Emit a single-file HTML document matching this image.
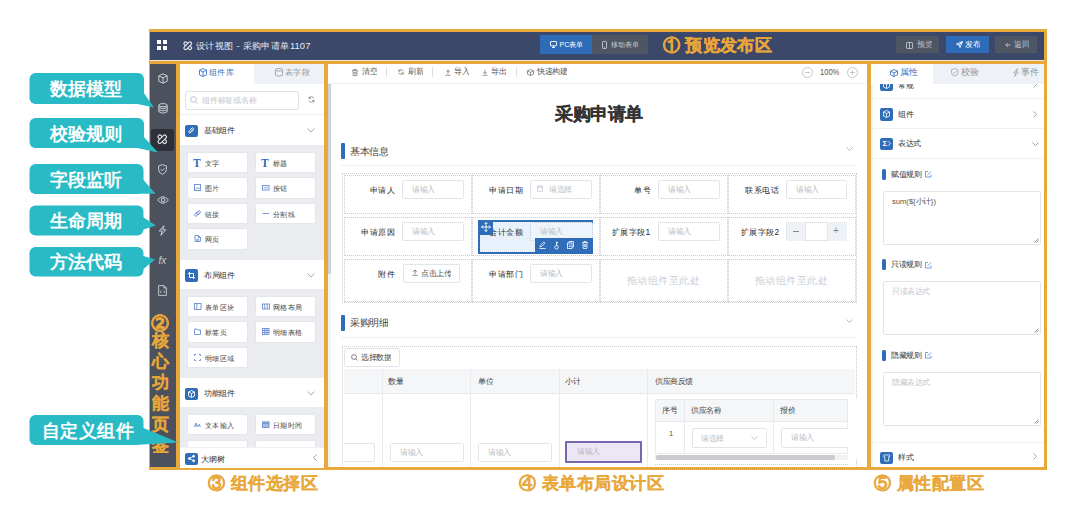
<!DOCTYPE html>
<html><head><meta charset="utf-8">
<style>
*{box-sizing:border-box;margin:0;padding:0}
html,body{width:1080px;height:522px;overflow:hidden;background:#fff}
body{position:relative;font-family:"Liberation Sans",sans-serif;color:#333}
.a{position:absolute}
.or{color:#E9A83C;font-weight:bold;-webkit-text-stroke:0.3px #E9A83C}
svg{position:absolute;overflow:visible}
.t{position:absolute;white-space:nowrap;line-height:1}
.card{position:absolute;width:61px;height:21.5px;background:#fff;border:1px solid #E3E6EB;border-radius:2px}
.ct{color:#444}
.ib{position:absolute;width:12.5px;height:12.5px;background:#2F6DB8;border-radius:2px}
.ht{color:#333}
.lab{position:absolute;white-space:nowrap;line-height:1;color:#333}
</style></head><body>

<!-- outer orange frame -->
<div class="a" style="left:149px;top:29px;width:898px;height:441px;background:#E8A83A"></div>
<!-- header -->
<div class="a" style="left:150px;top:32px;width:894px;height:28px;background:#3C4869"></div>
<div class="a" style="left:150px;top:60px;width:894px;height:1px;background:#EFE6D4"></div>
<!-- sidebar -->
<div class="a" style="left:150px;top:64px;width:26px;height:403px;background:#4B525D"></div>
<!-- component panel -->
<div class="a" id="p3" style="left:180px;top:64px;width:144px;height:403px;background:#fff;overflow:hidden"></div>
<!-- canvas -->
<div class="a" id="p4" style="left:328px;top:64px;width:539px;height:403px;background:#fff;overflow:hidden"></div>
<!-- right panel -->
<div class="a" id="p5" style="left:871px;top:64px;width:173px;height:403px;background:#fff;overflow:hidden"></div>

<div id="comp">
<!-- tabs -->
<div class="a" style="left:254px;top:64px;width:70px;height:20px;background:#EEF1F5"></div>
<svg style="left:199px;top:68px" width="8" height="9" viewBox="0 0 8 9" fill="none" stroke="#3A74C2" stroke-width="0.9"><path d="M4 .5 L7.5 2.2 V6.8 L4 8.5 L.5 6.8 V2.2 Z M.5 2.2 L4 4 L7.5 2.2 M4 4 V8.5"/></svg>
<div class="t" style="left:208.5px;top:68px;font-size:20px;color:#3A74C2;transform:scale(0.4150);transform-origin:0 0">组件库</div>
<svg style="left:275px;top:68px" width="8" height="9" viewBox="0 0 8 9" fill="none" stroke="#9AA1AB" stroke-width="0.9"><ellipse cx="4" cy="1.8" rx="3.5" ry="1.3"/><path d="M.5 1.8 V7.2 Q4 9.4 7.5 7.2 V1.8"/></svg>
<div class="t" style="left:285px;top:68px;font-size:20px;color:#8E949C;transform:scale(0.4150);transform-origin:0 0">表字段</div>
<!-- search -->
<div class="a" style="left:184.5px;top:90.5px;width:114px;height:19px;border:1px solid #DFE3E8;border-radius:2px"></div>
<svg style="left:189.5px;top:96px" width="8" height="8" viewBox="0 0 8 8" fill="none" stroke="#B0B5BC" stroke-width="0.9"><circle cx="3.5" cy="3.5" r="2.8"/><path d="M5.6 5.6 L7.4 7.4"/></svg>
<div class="t" style="left:202px;top:96px;font-size:20px;color:#BFC3CA;transform:scale(0.3900);transform-origin:0 0">组件标签或名称</div>
<svg style="left:307.5px;top:96px" width="7" height="7" viewBox="0 0 7 7" fill="none" stroke="#8E949C" stroke-width="0.9"><path d="M6 2.5 A2.7 2.7 0 0 0 1 2.3 M1 4.5 A2.7 2.7 0 0 0 6 4.7 M1 .5 V2.5 H3 M6 6.5 V4.5 H4"/></svg>
<div class="a" style="left:180px;top:114px;width:144px;height:1px;background:#EEF0F3"></div>
<!-- gray areas -->
<div class="a" style="left:180px;top:145px;width:144px;height:115px;background:#EAECF0"></div>
<div class="a" style="left:180px;top:288.5px;width:144px;height:90px;background:#EAECF0"></div>
<div class="a" style="left:180px;top:407px;width:144px;height:60px;background:#EAECF0"></div>
<div class="a" style="left:180px;top:115px;width:144px;height:29px;background:#fff"></div>
<div class="ib" style="left:185px;top:124.5px"></div><svg style="left:187.5px;top:127.0px" width="7" height="7" viewBox="0 0 7 7" fill="none" stroke="#fff" stroke-width="1"><path d="M5.5 2.8 L3 5.3 Q2 6.3 1.2 5.5 Q.4 4.7 1.4 3.7 L4 1.1 Q4.6 .5 5.2 1.1 Q5.8 1.7 5.2 2.3 L2.8 4.7"/></svg>
<div class="t ht" style="font-size:20px;left:203.5px;top:127px;transform:scale(0.3800);transform-origin:0 0">基础组件</div>
<svg style="left:306.5px;top:128px" width="8" height="5" viewBox="0 0 8 5" fill="none" stroke="#9AA0A8" stroke-width="0.9"><path d="M.5 .5 L4 4 L7.5 .5"/></svg>
<div class="a" style="left:180px;top:259.5px;width:144px;height:29px;background:#fff"></div>
<div class="ib" style="left:185px;top:269.0px"></div><svg style="left:187.5px;top:271.5px" width="7" height="7" viewBox="0 0 7 7" fill="none" stroke="#fff" stroke-width="1"><path d="M1.5 0 V5.5 H7 M0 1.5 H5.5 V7"/></svg>
<div class="t ht" style="font-size:20px;left:203.5px;top:271.5px;transform:scale(0.3800);transform-origin:0 0">布局组件</div>
<svg style="left:306.5px;top:272.5px" width="8" height="5" viewBox="0 0 8 5" fill="none" stroke="#9AA0A8" stroke-width="0.9"><path d="M.5 .5 L4 4 L7.5 .5"/></svg>
<div class="a" style="left:180px;top:378px;width:144px;height:29px;background:#fff"></div>
<div class="ib" style="left:185px;top:387.5px"></div><svg style="left:187.5px;top:389.8px" width="7" height="8" viewBox="0 0 7 8" fill="none" stroke="#fff" stroke-width="0.9"><path d="M3.5 .5 L6.5 2 V6 L3.5 7.5 L.5 6 V2 Z M.5 2 L3.5 3.5 L6.5 2 M3.5 3.5 V7.5"/></svg>
<div class="t ht" style="font-size:20px;left:203.5px;top:390px;transform:scale(0.3800);transform-origin:0 0">功能组件</div>
<svg style="left:306.5px;top:391px" width="8" height="5" viewBox="0 0 8 5" fill="none" stroke="#9AA0A8" stroke-width="0.9"><path d="M.5 .5 L4 4 L7.5 .5"/></svg>
<div class="card" style="left:186.7px;top:151.5px"></div><div class="t" style="left:193.0px;top:157.0px;font-family:'Liberation Serif',serif;font-weight:bold;font-size:20px;color:#2F6DB8;transform:scale(0.5750);transform-origin:0 0">T</div><div class="t ct" style="font-size:20px;left:204.8px;top:159.8px;transform:scale(0.3650);transform-origin:0 0">文字</div>
<div class="card" style="left:254.7px;top:151.5px"></div><div class="t" style="left:261.0px;top:157.0px;font-family:'Liberation Serif',serif;font-weight:bold;font-size:20px;color:#2F6DB8;transform:scale(0.5750);transform-origin:0 0">T</div><div class="t ct" style="font-size:20px;left:272.8px;top:159.8px;transform:scale(0.3650);transform-origin:0 0">标题</div>
<div class="card" style="left:186.7px;top:177px"></div><svg style="left:194.0px;top:184.3px" width="7" height="7" viewBox="0 0 7 7" fill="none" stroke="#6A8DD0" stroke-width="0.9"><rect x=".5" y=".5" width="6" height="6"/><path d="M1 5.5 L3 3.5 L4.5 5 L6 3.8"/></svg><div class="t ct" style="font-size:20px;left:204.8px;top:185.3px;transform:scale(0.3650);transform-origin:0 0">图片</div>
<div class="card" style="left:254.7px;top:177px"></div><svg style="left:262.0px;top:184.3px" width="8" height="7" viewBox="0 0 8 7" fill="none" stroke="#6A8DD0" stroke-width="0.9"><rect x=".5" y="1.5" width="6.5" height="4.5"/><path d="M1.8 3.8 H5.7"/></svg><div class="t ct" style="font-size:20px;left:272.8px;top:185.3px;transform:scale(0.3650);transform-origin:0 0">按钮</div>
<div class="card" style="left:186.7px;top:202.5px"></div><svg style="left:194.0px;top:209.8px" width="7" height="7" viewBox="0 0 7 7" fill="none" stroke="#6A8DD0" stroke-width="0.9"><rect x="3.2" y=".6" width="2.6" height="4.2" rx="1.3" transform="rotate(45 4.5 2.7)"/><rect x="1.2" y="2.2" width="2.6" height="4.2" rx="1.3" transform="rotate(45 2.5 4.3)"/></svg><div class="t ct" style="font-size:20px;left:204.8px;top:210.8px;transform:scale(0.3650);transform-origin:0 0">链接</div>
<div class="card" style="left:254.7px;top:202.5px"></div><svg style="left:262.0px;top:209.8px" width="8" height="7" viewBox="0 0 8 7" fill="none" stroke="#6A8DD0" stroke-width="0.9"><path d="M.5 3.5 H7"/></svg><div class="t ct" style="font-size:20px;left:272.8px;top:210.8px;transform:scale(0.3650);transform-origin:0 0">分割线</div>
<div class="card" style="left:186.7px;top:228px"></div><svg style="left:194.0px;top:235.3px" width="7" height="7" viewBox="0 0 7 7" fill="none" stroke="#6A8DD0" stroke-width="0.9"><path d="M1 .5 H4.5 L6.5 2.5 V6.5 H1 Z M4.5 .5 V2.5 H6.5 M2.3 4.2 H5.2 M2.3 5.3 H5.2"/></svg><div class="t ct" style="font-size:20px;left:204.8px;top:236.3px;transform:scale(0.3650);transform-origin:0 0">网页</div>
<div class="card" style="left:186.7px;top:295.5px"></div><svg style="left:194.0px;top:302.8px" width="8" height="7" viewBox="0 0 8 7" fill="none" stroke="#6A8DD0" stroke-width="0.9"><rect x=".5" y=".5" width="6.5" height="6"/><path d="M2.8 .5 V6.5"/></svg><div class="t ct" style="font-size:20px;left:204.8px;top:303.8px;transform:scale(0.3650);transform-origin:0 0">表单区块</div>
<div class="card" style="left:254.7px;top:295.5px"></div><svg style="left:262.0px;top:302.8px" width="8" height="7" viewBox="0 0 8 7" fill="none" stroke="#6A8DD0" stroke-width="0.9"><rect x=".5" y="1" width="7" height="5"/><path d="M2.8 1 V6 M5.2 1 V6"/></svg><div class="t ct" style="font-size:20px;left:272.8px;top:303.8px;transform:scale(0.3650);transform-origin:0 0">网格布局</div>
<div class="card" style="left:186.7px;top:321px"></div><svg style="left:194.0px;top:328.3px" width="7" height="7" viewBox="0 0 7 7" fill="none" stroke="#6A8DD0" stroke-width="0.9"><path d="M.5 1 H3 L3.8 2 H6.5 V6.5 H.5 Z"/></svg><div class="t ct" style="font-size:20px;left:204.8px;top:329.3px;transform:scale(0.3650);transform-origin:0 0">标签页</div>
<div class="card" style="left:254.7px;top:321px"></div><svg style="left:262.0px;top:328.3px" width="8" height="7" viewBox="0 0 8 7" fill="none" stroke="#6A8DD0" stroke-width="0.9"><rect x=".5" y=".5" width="6.5" height="6"/><path d="M.5 2.5 H7 M.5 4.5 H7 M2.7 .5 V6.5 M4.9 .5 V6.5"/></svg><div class="t ct" style="font-size:20px;left:272.8px;top:329.3px;transform:scale(0.3650);transform-origin:0 0">明细表格</div>
<div class="card" style="left:186.7px;top:346.5px"></div><svg style="left:194.0px;top:353.8px" width="7" height="7" viewBox="0 0 7 7" fill="none" stroke="#6A8DD0" stroke-width="0.9"><path d="M.5 2 V.5 H2 M5 .5 H6.5 V2 M6.5 5 V6.5 H5 M2 6.5 H.5 V5"/></svg><div class="t ct" style="font-size:20px;left:204.8px;top:354.8px;transform:scale(0.3650);transform-origin:0 0">明细区域</div>
<div class="card" style="left:186.7px;top:413.5px"></div><svg style="left:194.0px;top:420.8px" width="8" height="7" viewBox="0 0 8 7" fill="none" stroke="#6A8DD0" stroke-width="0.9"><path d="M.5 6 L2 2 L3.5 6 M1 4.8 H3 M4 6 L5.2 3.2 L6.4 6"/></svg><div class="t ct" style="font-size:20px;left:204.8px;top:421.8px;transform:scale(0.3650);transform-origin:0 0">文本输入</div>
<div class="card" style="left:254.7px;top:413.5px"></div><svg style="left:262.0px;top:420.8px" width="8" height="7" viewBox="0 0 8 7" fill="none" stroke="#6A8DD0" stroke-width="0.9"><rect x=".5" y="1" width="6.5" height="5.5" fill="#A9C0E8"/><path d="M.5 2.6 H7 M2 .2 V1.6 M5.5 .2 V1.6"/></svg><div class="t ct" style="font-size:20px;left:272.8px;top:421.8px;transform:scale(0.3650);transform-origin:0 0">日期时间</div>
<div class="card" style="left:186.7px;top:439.5px"></div><div class="t ct" style="font-size:20px;left:204.8px;top:447.8px;transform:scale(0.3650);transform-origin:0 0"></div>
<div class="card" style="left:254.7px;top:439.5px"></div><div class="t ct" style="font-size:20px;left:272.8px;top:447.8px;transform:scale(0.3650);transform-origin:0 0"></div>
<!-- outline tree bar -->
<div class="a" style="left:180px;top:446.5px;width:144px;height:21px;background:#fff;border-top:1px solid #EEF0F3"></div>
<div class="ib" style="left:185px;top:452.5px"></div>
<svg style="left:187.5px;top:455px" width="7" height="7" viewBox="0 0 7 7" fill="#fff" stroke="#fff" stroke-width="0.8"><circle cx="5.6" cy="1.2" r="1"/><circle cx="1.4" cy="3.5" r="1"/><circle cx="5.6" cy="5.8" r="1"/><path d="M5.6 1.2 L1.4 3.5 L5.6 5.8" fill="none"/></svg>
<div class="t" style="left:200.5px;top:455.5px;font-size:8px;color:#333">大纲树</div>
<svg style="left:313px;top:454px" width="4" height="7" viewBox="0 0 4 7" fill="none" stroke="#8E949C" stroke-width="0.9"><path d="M3.5 .5 L.5 3.5 L3.5 6.5"/></svg>
</div>
<div id="canvas" class="a" style="left:0;top:0;width:1080px;height:522px;clip-path:inset(64px 213.5px 55px 328px)">
<div class="a" style="left:328px;top:83px;width:539px;height:1px;background:#EEF0F3"></div>
<svg style="left:352px;top:68.5px" width="6" height="7" viewBox="0 0 6 7" fill="none" stroke="#777" stroke-width="0.8"><path d="M.3 1.3 H5.7 M2 1.3 V.4 H4 V1.3 M.9 1.3 L1.3 6.6 H4.7 L5.1 1.3 M2.3 2.8 V5.2 M3.7 2.8 V5.2"/></svg>
<div class="t" style="left:361.5px;top:68px;font-size:20px;color:#555;transform:scale(0.3750);transform-origin:0 0">清空</div>
<div class="a" style="left:386px;top:67px;width:1px;height:9.5px;background:#DDE0E5"></div>
<svg style="left:397.8px;top:68.8px" width="6" height="6" viewBox="0 0 6 6" fill="none" stroke="#777" stroke-width="0.8"><path d="M5.3 2.2 A2.5 2.5 0 0 0 .8 2 M.7 3.8 A2.5 2.5 0 0 0 5.2 4 M.7 .5 V2.1 H2.3 M5.3 5.5 V3.9 H3.7"/></svg>
<div class="t" style="left:407.5px;top:68px;font-size:20px;color:#555;transform:scale(0.3750);transform-origin:0 0">刷新</div>
<div class="a" style="left:432px;top:67px;width:1px;height:9.5px;background:#DDE0E5"></div>
<svg style="left:444.5px;top:68.5px" width="6" height="7" viewBox="0 0 6 7" fill="none" stroke="#777" stroke-width="0.8"><path d="M.5 6.3 H5.5 M3 5 V1 M1.3 2.7 L3 1 L4.7 2.7"/></svg>
<div class="t" style="left:453.5px;top:68px;font-size:20px;color:#555;transform:scale(0.3750);transform-origin:0 0">导入</div>
<svg style="left:482px;top:68.5px" width="6" height="7" viewBox="0 0 6 7" fill="none" stroke="#777" stroke-width="0.8"><path d="M.5 6.3 H5.5 M3 .8 V4.8 M1.3 3.1 L3 4.8 L4.7 3.1"/></svg>
<div class="t" style="left:490.5px;top:68px;font-size:20px;color:#555;transform:scale(0.3750);transform-origin:0 0">导出</div>
<div class="a" style="left:515.5px;top:67px;width:1px;height:9.5px;background:#DDE0E5"></div>
<svg style="left:526.5px;top:68.5px" width="7" height="7" viewBox="0 0 7 7" fill="none" stroke="#777" stroke-width="0.8"><path d="M3.5 .4 L6.5 1.9 V5.1 L3.5 6.6 L.5 5.1 V1.9 Z M.5 1.9 L3.5 3.4 L6.5 1.9 M3.5 3.4 V6.6"/></svg>
<div class="t" style="left:536.5px;top:68px;font-size:20px;color:#555;transform:scale(0.3750);transform-origin:0 0">快速构建</div>
<svg style="left:802px;top:66.5px" width="11" height="11" viewBox="0 0 11 11" fill="none" stroke="#B5B9C0" stroke-width="0.8"><circle cx="5.5" cy="5.5" r="5"/><path d="M3 5.5 H8"/></svg>
<div class="t" style="left:820px;top:67.5px;font-size:9px;color:#555;transform:scaleX(0.84);transform-origin:0 0">100%</div>
<svg style="left:846.5px;top:66.5px" width="11" height="11" viewBox="0 0 11 11" fill="none" stroke="#B5B9C0" stroke-width="0.8"><circle cx="5.5" cy="5.5" r="5"/><path d="M3 5.5 H8 M5.5 3 V8"/></svg>
<div class="a" style="left:328px;top:84px;width:3px;height:383px;background:#F2F3F5"></div>
<div class="a" style="left:328px;top:84px;width:3px;height:190px;background:#CFD2D6"></div>
<div class="t" style="left:555px;top:104.8px;font-size:20px;color:#333;font-weight:bold;letter-spacing:0.000px;-webkit-text-stroke:0.35px #333;transform:scale(0.8750);transform-origin:0 0">采购申请单</div>
<div class="a" style="left:341px;top:142.5px;width:3.5px;height:16px;background:#2F6DB8;border-radius:1px"></div>
<div class="t" style="left:350px;top:146.5px;font-size:20px;color:#444;transform:scale(0.4750);transform-origin:0 0">基本信息</div>
<svg style="left:846px;top:147px" width="7" height="5" viewBox="0 0 7 5" fill="none" stroke="#A0A5AD" stroke-width="0.8"><path d="M.5 .5 L3.5 3.5 L6.5 .5"/></svg>
<div class="a" style="left:341px;top:165px;width:515px;height:1px;background:#EEF0F3"></div>
<div class="a" style="left:341.5px;top:173px;width:515px;height:130px;border:1px dotted #C9CCD2"></div>
<div class="a" style="left:343.5px;top:175px;width:128px;height:38.5px;border:1px dotted #C9CCD2"></div>
<div class="a" style="left:471.5px;top:175px;width:128px;height:38.5px;border:1px dotted #C9CCD2"></div>
<div class="a" style="left:599.5px;top:175px;width:128px;height:38.5px;border:1px dotted #C9CCD2"></div>
<div class="a" style="left:727.5px;top:175px;width:128px;height:38.5px;border:1px dotted #C9CCD2"></div>
<div class="a" style="left:343.5px;top:217px;width:128px;height:38.5px;border:1px dotted #C9CCD2"></div>
<div class="a" style="left:471.5px;top:217px;width:128px;height:38.5px;border:1px dotted #C9CCD2"></div>
<div class="a" style="left:599.5px;top:217px;width:128px;height:38.5px;border:1px dotted #C9CCD2"></div>
<div class="a" style="left:727.5px;top:217px;width:128px;height:38.5px;border:1px dotted #C9CCD2"></div>
<div class="a" style="left:343.5px;top:259px;width:128px;height:43px;border:1px dotted #C9CCD2"></div>
<div class="a" style="left:471.5px;top:259px;width:128px;height:43px;border:1px dotted #C9CCD2"></div>
<div class="a" style="left:599.5px;top:259px;width:128px;height:43px;border:1px dotted #C9CCD2"></div>
<div class="a" style="left:727.5px;top:259px;width:128px;height:43px;border:1px dotted #C9CCD2"></div>
<div class="t lab" style="font-size:20px;color:#2a2a2a;right:685px;top:186px;transform:scale(0.4200);transform-origin:100% 0">申请人</div>
<div class="a" style="left:402px;top:179.5px;width:62px;height:19.5px;background:#fff;border:1px solid #E1E4E9;border-radius:1.5px"></div><div class="t" style="left:412px;top:186px;font-size:20px;color:#B8BCC3;transform:scale(0.3750);transform-origin:0 0">请输入</div>
<div class="t lab" style="font-size:20px;color:#2a2a2a;right:557px;top:186px;transform:scale(0.4200);transform-origin:100% 0">申请日期</div>
<div class="a" style="left:529.5px;top:179.5px;width:62px;height:19.5px;background:#fff;border:1px solid #E1E4E9;border-radius:1.5px"></div><div class="t" style="left:548.5px;top:186px;font-size:20px;color:#B8BCC3;transform:scale(0.3750);transform-origin:0 0">请选择</div>
<svg style="left:537px;top:185px" width="6" height="7" viewBox="0 0 6 7" fill="none" stroke="#C5C9CF" stroke-width="0.7"><rect x=".4" y="1" width="5.2" height="5.6"/><path d="M.4 2.6 H5.6 M1.8 .2 V1.6 M4.2 .2 V1.6"/></svg>
<div class="t lab" style="font-size:20px;color:#2a2a2a;right:429.5px;top:186px;transform:scale(0.4200);transform-origin:100% 0">单号</div>
<div class="a" style="left:657.5px;top:179.5px;width:62px;height:19.5px;background:#fff;border:1px solid #E1E4E9;border-radius:1.5px"></div><div class="t" style="left:667.5px;top:186px;font-size:20px;color:#B8BCC3;transform:scale(0.3750);transform-origin:0 0">请输入</div>
<div class="t lab" style="font-size:20px;color:#2a2a2a;right:301px;top:186px;transform:scale(0.4200);transform-origin:100% 0">联系电话</div>
<div class="a" style="left:786px;top:179.5px;width:61px;height:19.5px;background:#fff;border:1px solid #E1E4E9;border-radius:1.5px"></div><div class="t" style="left:796px;top:186px;font-size:20px;color:#B8BCC3;transform:scale(0.3750);transform-origin:0 0">请输入</div>
<div class="t lab" style="font-size:20px;color:#2a2a2a;right:685px;top:227.5px;transform:scale(0.4200);transform-origin:100% 0">申请原因</div>
<div class="a" style="left:402px;top:221.5px;width:62px;height:19.5px;background:#fff;border:1px solid #E1E4E9;border-radius:1.5px"></div><div class="t" style="left:412px;top:228px;font-size:20px;color:#B8BCC3;transform:scale(0.3750);transform-origin:0 0">请输入</div>
<div class="a" style="left:478px;top:219.5px;width:115px;height:34px;background:#E8F1FB;border:2px solid #2F6DB8"></div>
<div class="t lab" style="font-size:20px;color:#2a2a2a;right:557px;top:227.5px;transform:scale(0.4200);transform-origin:100% 0">合计金额</div>
<div class="a" style="left:529.5px;top:221.5px;width:63px;height:19px;background:#EEF4FB;border:1px solid #D5E1EE;border-radius:1.5px"></div><div class="t" style="left:539.5px;top:228px;font-size:20px;color:#B8BCC3;transform:scale(0.3750);transform-origin:0 0">请输入</div>
<div class="a" style="left:478px;top:219.5px;width:14.5px;height:15.5px;background:#2F6DB8"></div>
<svg style="left:480.5px;top:222px" width="10" height="10" viewBox="0 0 10 10" fill="none" stroke="#fff" stroke-width="0.9"><path d="M5 .5 V9.5 M.5 5 H9.5 M3.5 2 L5 .5 L6.5 2 M3.5 8 L5 9.5 L6.5 8 M2 3.5 L.5 5 L2 6.5 M8 3.5 L9.5 5 L8 6.5"/></svg>
<div class="a" style="left:535px;top:238px;width:58px;height:15.5px;background:#2F6DB8"></div>
<svg style="left:539px;top:241px" width="7" height="8" viewBox="0 0 7 8" fill="none" stroke="#fff" stroke-width="0.8"><path d="M1 6 L1.5 4.3 L4.8 1 L6 2.2 L2.7 5.5 Z M.5 7.5 H6.5"/></svg>
<svg style="left:554px;top:240.5px" width="5" height="9" viewBox="0 0 5 9" fill="none" stroke="#fff" stroke-width="0.8"><circle cx="2.5" cy="6.3" r="1.8"/><path d="M2.5 4.5 V.5 M2.5 1.5 H4 M2.5 2.8 H3.6"/></svg>
<svg style="left:567px;top:241px" width="7" height="8" viewBox="0 0 7 8" fill="none" stroke="#fff" stroke-width="0.8"><rect x=".5" y="2" width="4.5" height="5.5"/><path d="M2 2 V.5 H6.5 V6 H5 M1.8 4 H3.7 M1.8 5.5 H3.7"/></svg>
<svg style="left:581.5px;top:240.5px" width="6" height="8" viewBox="0 0 6 8" fill="none" stroke="#fff" stroke-width="0.8"><path d="M.3 1.5 H5.7 M2 1.5 V.5 H4 V1.5 M.9 1.5 L1.2 7.5 H4.8 L5.1 1.5 M2.3 3 V6 M3.7 3 V6"/></svg>
<div class="t lab" style="font-size:20px;color:#2a2a2a;right:429.5px;top:227.5px;transform:scale(0.4200);transform-origin:100% 0">扩展字段1</div>
<div class="a" style="left:657.5px;top:221.5px;width:62px;height:19.5px;background:#fff;border:1px solid #E1E4E9;border-radius:1.5px"></div><div class="t" style="left:667.5px;top:228px;font-size:20px;color:#B8BCC3;transform:scale(0.3750);transform-origin:0 0">请输入</div>
<div class="t lab" style="font-size:20px;color:#2a2a2a;right:301px;top:227.5px;transform:scale(0.4200);transform-origin:100% 0">扩展字段2</div>
<div class="a" style="left:786px;top:221.5px;width:61px;height:19.5px;background:#fff;border:1px solid #E1E4E9;border-radius:1.5px"></div>
<div class="a" style="left:786.5px;top:222px;width:19.5px;height:18.5px;background:#EEF1F5;border-right:1px solid #E1E4E9"></div>
<div class="a" style="left:826.5px;top:222px;width:20px;height:18.5px;background:#EEF1F5;border-left:1px solid #E1E4E9"></div>
<div class="a" style="left:792.5px;top:231px;width:6px;height:1px;background:#888"></div>
<div class="t" style="left:833px;top:226px;font-size:10px;color:#888;">+</div>
<div class="t lab" style="font-size:20px;color:#2a2a2a;right:685px;top:269.5px;transform:scale(0.4200);transform-origin:100% 0">附件</div>
<div class="a" style="left:402.5px;top:264px;width:57px;height:19px;background:#fff;border:1px solid #E1E4E9;border-radius:1.5px"></div>
<svg style="left:412px;top:269px" width="6" height="7" viewBox="0 0 6 7" fill="none" stroke="#666" stroke-width="0.8"><path d="M.5 6.3 H5.5 M3 5 V1 M1.3 2.7 L3 1 L4.7 2.7"/></svg>
<div class="t" style="left:421px;top:270px;font-size:20px;color:#555;transform:scale(0.3750);transform-origin:0 0">点击上传</div>
<div class="t lab" style="font-size:20px;color:#2a2a2a;right:557px;top:269.5px;transform:scale(0.4200);transform-origin:100% 0">申请部门</div>
<div class="a" style="left:530px;top:264px;width:61.5px;height:19px;background:#fff;border:1px solid #E1E4E9;border-radius:1.5px"></div><div class="t" style="left:540px;top:270px;font-size:20px;color:#B8BCC3;transform:scale(0.3750);transform-origin:0 0">请输入</div>
<div class="t" style="left:626.5px;top:275.5px;font-size:10px;color:#CDD0D5;letter-spacing:0.5px">拖动组件至此处</div>
<div class="t" style="left:754.5px;top:275.5px;font-size:10px;color:#CDD0D5;letter-spacing:0.5px">拖动组件至此处</div>
<div class="a" style="left:341px;top:314.5px;width:3.5px;height:16px;background:#2F6DB8;border-radius:1px"></div>
<div class="t" style="left:350px;top:318px;font-size:20px;color:#444;transform:scale(0.4750);transform-origin:0 0">采购明细</div>
<svg style="left:846px;top:319px" width="7" height="5" viewBox="0 0 7 5" fill="none" stroke="#A0A5AD" stroke-width="0.8"><path d="M.5 .5 L3.5 3.5 L6.5 .5"/></svg>
<div class="a" style="left:341px;top:337px;width:515px;height:1px;background:#EEF0F3"></div>
<div class="a" style="left:341.5px;top:346px;width:515px;height:130px;border:1px dotted #C9CCD2"></div>
<div class="a" style="left:344px;top:348px;width:56px;height:18.5px;background:#fff;border:1px solid #E1E4E9;border-radius:1.5px"></div>
<svg style="left:351px;top:354px" width="7" height="7" viewBox="0 0 7 7" fill="none" stroke="#666" stroke-width="0.8"><circle cx="3" cy="3" r="2.4"/><path d="M4.8 4.8 L6.5 6.5"/></svg>
<div class="t" style="left:361px;top:353.5px;font-size:20px;color:#444;transform:scale(0.3750);transform-origin:0 0">选择数据</div>
<div class="a" style="left:344px;top:369px;width:510.5px;height:25px;background:#F5F6F8;border-bottom:1px solid #E8EAED"></div>
<div class="a" style="left:344px;top:394px;width:510.5px;height:73px;background:#fff"></div>
<div class="a" style="left:381.5px;top:369px;width:1px;height:98px;background:#E8EAED"></div>
<div class="a" style="left:470px;top:369px;width:1px;height:98px;background:#E8EAED"></div>
<div class="a" style="left:559px;top:369px;width:1px;height:98px;background:#E8EAED"></div>
<div class="a" style="left:647px;top:369px;width:1px;height:98px;background:#E8EAED"></div>
<div class="t" style="left:388px;top:378px;font-size:20px;color:#444;transform:scale(0.3750);transform-origin:0 0">数量</div>
<div class="t" style="left:477.5px;top:378px;font-size:20px;color:#444;transform:scale(0.3750);transform-origin:0 0">单位</div>
<div class="t" style="left:565px;top:378px;font-size:20px;color:#444;transform:scale(0.3750);transform-origin:0 0">小计</div>
<div class="t" style="left:654.5px;top:378px;font-size:20px;color:#444;transform:scale(0.3750);transform-origin:0 0">供应商反馈</div>
<div class="a" style="left:344px;top:442.5px;width:30.5px;height:19px;background:#fff;border:1px solid #E1E4E9;border-left:none;border-radius:0 1.5px 1.5px 0"></div>
<div class="a" style="left:389.5px;top:442.5px;width:74px;height:19px;background:#fff;border:1px solid #E1E4E9;border-radius:1.5px"></div><div class="t" style="left:399.5px;top:448.5px;font-size:20px;color:#B8BCC3;transform:scale(0.3750);transform-origin:0 0">请输入</div>
<div class="a" style="left:478px;top:442.5px;width:74px;height:19px;background:#fff;border:1px solid #E1E4E9;border-radius:1.5px"></div><div class="t" style="left:488px;top:448.5px;font-size:20px;color:#B8BCC3;transform:scale(0.3750);transform-origin:0 0">请输入</div>
<div class="a" style="left:565px;top:440.5px;width:77px;height:22.5px;background:#EDE7F4;border:2px solid #7468B6;border-radius:1px"></div>
<div class="t" style="left:577px;top:448px;font-size:20px;color:#B8B3C8;transform:scale(0.3750);transform-origin:0 0">请输入</div>
<div class="a" style="left:655px;top:399px;width:192.5px;height:55px;background:#fff;border:1px solid #E8EAED"></div>
<div class="a" style="left:655px;top:399px;width:192.5px;height:23px;background:#F5F6F8;border:1px solid #E8EAED"></div>
<div class="a" style="left:684px;top:399px;width:1px;height:55px;background:#E8EAED"></div>
<div class="a" style="left:773px;top:399px;width:1px;height:55px;background:#E8EAED"></div>
<div class="t" style="left:662px;top:407px;font-size:20px;color:#444;transform:scale(0.3750);transform-origin:0 0">序号</div>
<div class="t" style="left:690.5px;top:407px;font-size:20px;color:#444;transform:scale(0.3750);transform-origin:0 0">供应名称</div>
<div class="t" style="left:779.5px;top:407px;font-size:20px;color:#444;transform:scale(0.3750);transform-origin:0 0">报价</div>
<div class="t" style="left:668.5px;top:430px;font-size:20px;color:#555;transform:scale(0.3750);transform-origin:0 0">1</div>
<div class="a" style="left:692px;top:428px;width:74.5px;height:19.5px;background:#fff;border:1px solid #E1E4E9;border-radius:1.5px"></div><div class="t" style="left:701px;top:434.5px;font-size:20px;color:#B8BCC3;transform:scale(0.3750);transform-origin:0 0">请选择</div>
<svg style="left:750.5px;top:436px" width="7" height="4" viewBox="0 0 7 4" fill="none" stroke="#B0B5BC" stroke-width="0.8"><path d="M.5 .5 L3.5 3.5 L6.5 .5"/></svg>
<div class="a" style="left:781px;top:428px;width:70px;height:19.5px;background:#fff;border:1px solid #E1E4E9;border-radius:1.5px"></div><div class="t" style="left:791px;top:434px;font-size:20px;color:#B8BCC3;transform:scale(0.3750);transform-origin:0 0">请输入</div>
<div class="a" style="left:847.5px;top:398px;width:10px;height:60px;background:#fff"></div>
<div class="a" style="left:655px;top:455px;width:192.5px;height:4.5px;background:#F1F2F4"></div>
<div class="a" style="left:655.5px;top:455px;width:179px;height:4.5px;background:#C8CACD;border-radius:2px"></div>
<div class="a" style="left:655px;top:463.5px;width:192.5px;height:1px;border-top:1px dotted #C9CCD2"></div>
</div>
<div id="props">
<div class="a" style="left:880px;top:78px;width:12.5px;height:12.5px;background:#2F6DB8;border-radius:2px"></div>
<svg style="left:883px;top:80.5px" width="7" height="8" viewBox="0 0 7 8" fill="none" stroke="#fff" stroke-width="0.8"><path d="M3.5 .5 L6.5 2 V6 L3.5 7.5 L.5 6 V2 Z M.5 2 L3.5 3.5 L6.5 2 M3.5 3.5 V7.5"/></svg>
<div class="t" style="left:898px;top:82px;font-size:20px;color:#333;transform:scale(0.3800);transform-origin:0 0">常规</div>
<svg style="left:1032.5px;top:81px" width="4" height="7" viewBox="0 0 4 7" fill="none" stroke="#999" stroke-width="0.9"><path d="M.5 .5 L3.5 3.5 L.5 6.5"/></svg>
<div class="a" style="left:871px;top:64px;width:62px;height:20px;background:#fff"></div>
<div class="a" style="left:933px;top:64px;width:111px;height:20px;background:#EEF1F5"></div>
<svg style="left:889.5px;top:68.5px" width="8" height="8" viewBox="0 0 8 8" fill="none" stroke="#3A74C2" stroke-width="0.9"><path d="M4 .5 L7.5 2.2 V5.8 L4 7.5 L.5 5.8 V2.2 Z M.5 2.2 L4 4 L7.5 2.2 M4 4 V7.5"/></svg>
<div class="t" style="left:899.5px;top:67.8px;font-size:20px;color:#3A74C2;transform:scale(0.4300);transform-origin:0 0">属性</div>
<svg style="left:950.5px;top:68.3px" width="7.5" height="8.5" viewBox="0 0 7.5 8.5" fill="none" stroke="#9AA1AB" stroke-width="0.8"><path d="M3.75 .5 L7 1.8 V4.5 Q7 7 3.75 8 Q.5 7 .5 4.5 V1.8 Z M2.2 4.3 L3.4 5.4 L5.4 3.2"/></svg>
<div class="t" style="left:961px;top:67.8px;font-size:20px;color:#8E949C;transform:scale(0.4300);transform-origin:0 0">校验</div>
<svg style="left:1012.5px;top:68px" width="6" height="9" viewBox="0 0 6 9" fill="none" stroke="#9AA1AB" stroke-width="0.8"><path d="M4.5 .5 L.8 5 H3 L1.5 8.5 L5.2 4 H3 Z"/></svg>
<div class="t" style="left:1021px;top:67.8px;font-size:20px;color:#8E949C;transform:scale(0.4300);transform-origin:0 0">事件</div>
<div class="a" style="left:871px;top:98px;width:173px;height:1px;background:#EEF0F3"></div>
<div class="a" style="left:880px;top:108px;width:12.5px;height:12.5px;background:#2F6DB8;border-radius:2px"></div>
<svg style="left:883px;top:110.3px" width="7" height="8" viewBox="0 0 7 8" fill="none" stroke="#fff" stroke-width="0.8"><path d="M3.5 .5 L6.5 2 V6 L3.5 7.5 L.5 6 V2 Z M.5 2 L3.5 3.5 L6.5 2 M3.5 3.5 V7.5"/></svg>
<div class="t" style="left:898px;top:110.5px;font-size:20px;color:#333;transform:scale(0.3800);transform-origin:0 0">组件</div>
<svg style="left:1032.5px;top:111px" width="4" height="7" viewBox="0 0 4 7" fill="none" stroke="#999" stroke-width="0.9"><path d="M.5 .5 L3.5 3.5 L.5 6.5"/></svg>
<div class="a" style="left:871px;top:128px;width:173px;height:1px;background:#EEF0F3"></div>
<div class="a" style="left:880px;top:137.5px;width:12.5px;height:12.5px;background:#2F6DB8;border-radius:2px"></div>
<div class="t" style="left:882.5px;top:139.5px;font-size:8px;color:#fff;font-weight:bold">Σ</div>
<svg style="left:887.5px;top:141px" width="3" height="5" viewBox="0 0 3 5" fill="none" stroke="#fff" stroke-width="0.8"><path d="M.3 .5 L2.5 2.5 L.3 4.5"/></svg>
<div class="t" style="left:898px;top:140px;font-size:20px;color:#333;transform:scale(0.3800);transform-origin:0 0">表达式</div>
<svg style="left:1031.5px;top:141.5px" width="7" height="4" viewBox="0 0 7 4" fill="none" stroke="#999" stroke-width="0.9"><path d="M.5 .5 L3.5 3.5 L6.5 .5"/></svg>
<div class="a" style="left:871px;top:157.5px;width:173px;height:1px;background:#EEF0F3"></div>
<div class="a" style="left:882px;top:168.5px;width:3.5px;height:11px;background:#2F6DB8;border-radius:1.5px"></div><div class="t" style="left:890.5px;top:170.5px;font-size:20px;color:#333;transform:scale(0.3800);transform-origin:0 0">赋值规则</div><svg style="left:924.5px;top:171.0px" width="6.5" height="6.5" viewBox="0 0 6.5 6.5" fill="none" stroke="#4E8BD6" stroke-width="0.8"><path d="M3 .5 H.5 V6 H6 V3.5 M2.5 4 L6 .5"/></svg><div class="a" style="left:882.5px;top:190.5px;width:158px;height:54px;background:#fff;border:1px solid #E1E4E9;border-radius:1.5px"></div><div class="t" style="left:891.5px;top:197.5px;font-size:20px;color:#555;transform:scale(0.3800);transform-origin:0 0">sum(${小计})</div><svg style="left:1033.5px;top:237.5px" width="5" height="5" viewBox="0 0 5 5" fill="none" stroke="#777" stroke-width="0.8"><path d="M4.5 .5 L.5 4.5 M4.5 2.5 L2.5 4.5"/></svg>
<div class="a" style="left:882px;top:259px;width:3.5px;height:11px;background:#2F6DB8;border-radius:1.5px"></div><div class="t" style="left:890.5px;top:261px;font-size:20px;color:#333;transform:scale(0.3800);transform-origin:0 0">只读规则</div><svg style="left:924.5px;top:261.5px" width="6.5" height="6.5" viewBox="0 0 6.5 6.5" fill="none" stroke="#4E8BD6" stroke-width="0.8"><path d="M3 .5 H.5 V6 H6 V3.5 M2.5 4 L6 .5"/></svg><div class="a" style="left:882.5px;top:281px;width:158px;height:54px;background:#fff;border:1px solid #E1E4E9;border-radius:1.5px"></div><div class="t" style="left:891.5px;top:288px;font-size:20px;color:#C0C4CB;transform:scale(0.3800);transform-origin:0 0">只读表达式</div><svg style="left:1033.5px;top:328px" width="5" height="5" viewBox="0 0 5 5" fill="none" stroke="#777" stroke-width="0.8"><path d="M4.5 .5 L.5 4.5 M4.5 2.5 L2.5 4.5"/></svg>
<div class="a" style="left:882px;top:349.5px;width:3.5px;height:11px;background:#2F6DB8;border-radius:1.5px"></div><div class="t" style="left:890.5px;top:351.5px;font-size:20px;color:#333;transform:scale(0.3800);transform-origin:0 0">隐藏规则</div><svg style="left:924.5px;top:352.0px" width="6.5" height="6.5" viewBox="0 0 6.5 6.5" fill="none" stroke="#4E8BD6" stroke-width="0.8"><path d="M3 .5 H.5 V6 H6 V3.5 M2.5 4 L6 .5"/></svg><div class="a" style="left:882.5px;top:371.5px;width:158px;height:54px;background:#fff;border:1px solid #E1E4E9;border-radius:1.5px"></div><div class="t" style="left:891.5px;top:378.5px;font-size:20px;color:#C0C4CB;transform:scale(0.3800);transform-origin:0 0">隐藏表达式</div><svg style="left:1033.5px;top:418.5px" width="5" height="5" viewBox="0 0 5 5" fill="none" stroke="#777" stroke-width="0.8"><path d="M4.5 .5 L.5 4.5 M4.5 2.5 L2.5 4.5"/></svg>
<div class="a" style="left:871px;top:442px;width:173px;height:1px;background:#EEF0F3"></div>
<div class="a" style="left:880px;top:451.5px;width:12.5px;height:12.5px;background:#2F6DB8;border-radius:2px"></div>
<svg style="left:882.5px;top:454px" width="7.5" height="7.5" viewBox="0 0 7.5 7.5" fill="none" stroke="#fff" stroke-width="0.8"><path d="M2.2 .5 L.5 1.5 L1.2 3 L1.8 2.8 V7 H5.7 V2.8 L6.3 3 L7 1.5 L5.3 .5 Q3.75 2.2 2.2 .5 Z"/></svg>
<div class="t" style="left:898px;top:454px;font-size:20px;color:#333;transform:scale(0.3800);transform-origin:0 0">样式</div>
<svg style="left:1032.5px;top:453px" width="4" height="7" viewBox="0 0 4 7" fill="none" stroke="#999" stroke-width="0.9"><path d="M.5 .5 L3.5 3.5 L.5 6.5"/></svg>
<div class="a" style="left:871px;top:84px;width:2px;height:383px;background:#F0F2F5"></div>
</div>
<!-- HEADER CONTENT -->
<div id="hdr">
 <!-- grid icon -->
 <div class="a" style="left:157px;top:40px;width:4px;height:4px;background:#fff"></div>
 <div class="a" style="left:162.5px;top:40px;width:4px;height:4px;background:#fff"></div>
 <div class="a" style="left:157px;top:45.5px;width:4px;height:4px;background:#fff"></div>
 <div class="a" style="left:162.5px;top:45.5px;width:4px;height:4px;background:#fff"></div>
 <!-- title icon -->
   <svg style="left:183px;top:40.5px" width="9.5" height="9.5" viewBox="0 0 10 10" fill="#3C4869" stroke="#E6E9F0" stroke-width="1.2"><rect x="0" y="3.3" width="10" height="3.4" rx="1.7" transform="rotate(45 5 5)"/><rect x="0" y="3.3" width="10" height="3.4" rx="1.7" transform="rotate(-45 5 5)"/></svg>
 <div class="t" style="left:195.5px;top:41px;font-size:20px;color:#E6E9F0;letter-spacing:0.170px;transform:scale(0.4700);transform-origin:0 0">设计视图 - 采购申请单1107</div>
 <!-- pc/mobile -->
 <div class="a" style="left:540px;top:35px;width:52px;height:19px;background:#2E6CB8"></div>
 <div class="a" style="left:592px;top:35px;width:56px;height:19px;background:#4E5563"></div>
  <svg style="left:549.5px;top:41px" width="7" height="7" viewBox="0 0 7 7" fill="none" stroke="#fff" stroke-width="0.9"><rect x="0.5" y="0.5" width="6" height="4.3" rx=".5"/><path d="M2 6.5h3M3.5 4.8v1.7"/></svg>
 <div class="t" style="left:559.5px;top:41.3px;font-size:7px;color:#fff">PC表单</div>
 <svg style="left:601.5px;top:40.5px" width="5" height="8" viewBox="0 0 5 8" fill="none" stroke="#C9CDD4" stroke-width="0.9"><rect x="0.5" y="0.5" width="4" height="7" rx="0.7"/><path d="M2 6.3h1"/></svg>
 <div class="t" style="left:611px;top:41.3px;font-size:7px;color:#C9CDD4">移动表单</div>
<div class="t or" style="left:663px;top:37px;font-size:17px;letter-spacing:0.3px;-webkit-text-stroke:0.4px #E8A53A">① 预览发布区</div>
 <!-- right buttons -->
 <div class="a" style="left:896px;top:36px;width:43px;height:17px;background:#4E5563"></div>
 <div class="a" style="left:946px;top:36px;width:43px;height:17px;background:#2E6CB8"></div>
 <div class="a" style="left:995px;top:36px;width:42px;height:17px;background:#4E5563"></div>
  <svg style="left:906px;top:41.5px" width="7" height="7" viewBox="0 0 7 7" fill="none" stroke="#BFC4CB" stroke-width="0.9"><rect x="0.5" y="0.5" width="6" height="6" rx=".6"/><path d="M3.5 .5v6"/></svg>
 <div class="t" style="left:916.5px;top:41px;font-size:20px;color:#C3C7CE;transform:scale(0.3750);transform-origin:0 0">预览</div>
 <svg style="left:955.5px;top:41px" width="7" height="7" viewBox="0 0 7 7" fill="none" stroke="#fff" stroke-width="0.9" stroke-linejoin="round"><path d="M6.5 .5 L.5 3 L3 4 L4 6.5 Z M3 4 L6.5 .5"/></svg>
 <div class="t" style="left:965px;top:41px;font-size:20px;color:#fff;transform:scale(0.3750);transform-origin:0 0">发布</div>
 <svg style="left:1004.5px;top:42px" width="6" height="6" viewBox="0 0 6 6" fill="none" stroke="#BFC4CB" stroke-width="0.9"><path d="M5.5 3 H.8 M2.8 1 L.8 3 L2.8 5"/></svg>
 <div class="t" style="left:1014px;top:41px;font-size:20px;color:#C3C7CE;transform:scale(0.3750);transform-origin:0 0">返回</div>
</div>

<!-- SIDEBAR CONTENT -->
<div id="side">
 <svg style="left:158px;top:73px" width="10" height="11" viewBox="0 0 10 11" fill="none" stroke="#C9CDD3" stroke-width="1"><path d="M5 .8 L9.2 2.8 V8.2 L5 10.2 L.8 8.2 V2.8 Z M.8 2.8 L5 4.8 L9.2 2.8 M5 4.8 V10.2"/></svg>
 <svg style="left:158px;top:102.5px" width="10" height="11" viewBox="0 0 10 11" fill="none" stroke="#C9CDD3" stroke-width="1"><ellipse cx="5" cy="2.2" rx="4.2" ry="1.6"/><path d="M.8 2.2 V8.8 Q5 11.6 9.2 8.8 V2.2 M.8 4.5 Q5 7 9.2 4.5 M.8 6.7 Q5 9.2 9.2 6.7"/></svg>
 <div class="a" style="left:151px;top:129px;width:23px;height:22px;background:#2D3137;border-radius:2px"></div>
 <svg style="left:157px;top:133.8px" width="10.5" height="10.5" viewBox="0 0 10 10" fill="#2D3137" stroke="#E3E6EA" stroke-width="1.1"><rect x="0" y="3.3" width="10" height="3.4" rx="1.7" transform="rotate(45 5 5)"/><rect x="0" y="3.3" width="10" height="3.4" rx="1.7" transform="rotate(-45 5 5)"/></svg>
 <svg style="left:157.7px;top:164px" width="9" height="11" viewBox="0 0 9 11" fill="none" stroke="#C9CDD3" stroke-width="1"><path d="M4.5 .6 L8.4 2 V5.5 Q8.4 8.8 4.5 10.4 Q.6 8.8 .6 5.5 V2 Z M2.6 5.4 L4 6.8 L6.5 4.2"/></svg>
 <svg style="left:157px;top:195.5px" width="12" height="8" viewBox="0 0 12 8" fill="none" stroke="#C9CDD3" stroke-width="1"><path d="M.6 4 Q6 -2.5 11.4 4 Q6 10.5 .6 4 Z"/><circle cx="6" cy="4" r="1.8"/></svg>
 <svg style="left:157.8px;top:225px" width="9" height="11" viewBox="0 0 9 11" fill="none" stroke="#C9CDD3" stroke-width="1"><path d="M6 .6 L1.2 6 H4.3 L2.8 10.4 L7.8 4.8 H4.7 Z"/></svg>
 <div class="t" style="left:158.5px;top:255.5px;font-size:10px;font-style:italic;color:#C9CDD3">fx</div>
 <svg style="left:157.8px;top:284.5px" width="9" height="11" viewBox="0 0 9 11" fill="none" stroke="#C9CDD3" stroke-width="0.9"><path d="M.6 .6 H6 L8.4 3 V10.4 H.6 Z M6 .6 V3 H8.4 M3.2 5.6 L2.2 6.8 L3.2 8 M5.8 5.6 L6.8 6.8 L5.8 8"/></svg>
 <div class="t or" style="left:150px;top:313.5px;width:20px;font-size:22px;line-height:20px;text-align:center;-webkit-text-stroke:0.2px #E8A53A">②</div>
 <div class="t or" style="left:151px;top:330px;width:18px;font-size:17px;line-height:21px;text-align:center;white-space:normal;word-break:break-all;-webkit-text-stroke:0.25px #E8A53A">核心功能页签</div>
</div>

<!-- CALLOUTS -->
<div id="callouts">
 <svg style="left:0;top:0" width="1080" height="522" viewBox="0 0 1080 522" fill="#29BBC5">
  <rect x="29.5" y="73" width="114.5" height="31" rx="6"/>
  <path d="M138 92.5 L143.5 92.5 L154 107.5 L136 103.8 Z"/>
  <rect x="29.5" y="118" width="114.5" height="30" rx="6"/>
  <path d="M138 136.5 L143.5 136.5 L158 152.5 L136 147.8 Z"/>
  <rect x="29.5" y="164" width="114" height="30" rx="6"/>
  <path d="M138 180 L143.5 180 L155.5 193.8 L136 193.8 Z"/>
  <rect x="29.5" y="205.5" width="114" height="30" rx="6"/>
  <path d="M138 217.5 L143.5 217.5 L156 225.5 L143.5 229.5 L138 229.5 Z"/>
  <rect x="29.5" y="247" width="114" height="29.5" rx="6"/>
  <path d="M138 256 L143.5 256 L155 259.5 L143.5 269 L138 269 Z"/>
  <rect x="29.5" y="415" width="114" height="30" rx="6"/>
  <path d="M138 428 L143.5 428 L178.5 442.5 L143.5 444.5 L138 444.5 Z"/>
 </svg>
 <div class="t" style="left:50px;top:80px;font-size:18px;font-weight:bold;color:#fff">数据模型</div>
 <div class="t" style="left:50px;top:124.5px;font-size:18px;font-weight:bold;color:#fff">校验规则</div>
 <div class="t" style="left:50px;top:170.5px;font-size:18px;font-weight:bold;color:#fff">字段监听</div>
 <div class="t" style="left:50px;top:212px;font-size:18px;font-weight:bold;color:#fff">生命周期</div>
 <div class="t" style="left:50px;top:253px;font-size:18px;font-weight:bold;color:#fff">方法代码</div>
 <div class="t" style="left:41.5px;top:422px;font-size:18px;font-weight:bold;color:#fff;letter-spacing:0.6px">自定义组件</div>
</div>

<!-- bottom labels -->
<div id="labels">
 <div class="t or" style="left:207.5px;top:474px;font-size:20px;letter-spacing:0.231px;transform:scale(0.8650);transform-origin:0 0">③ 组件选择区</div>
 <div class="t or" style="left:518.5px;top:474px;font-size:20px;letter-spacing:0.231px;transform:scale(0.8650);transform-origin:0 0">④ 表单布局设计区</div>
 <div class="t or" style="left:874px;top:474px;font-size:20px;letter-spacing:0.231px;transform:scale(0.8650);transform-origin:0 0">⑤ 属性配置区</div>
</div>

</body></html>
